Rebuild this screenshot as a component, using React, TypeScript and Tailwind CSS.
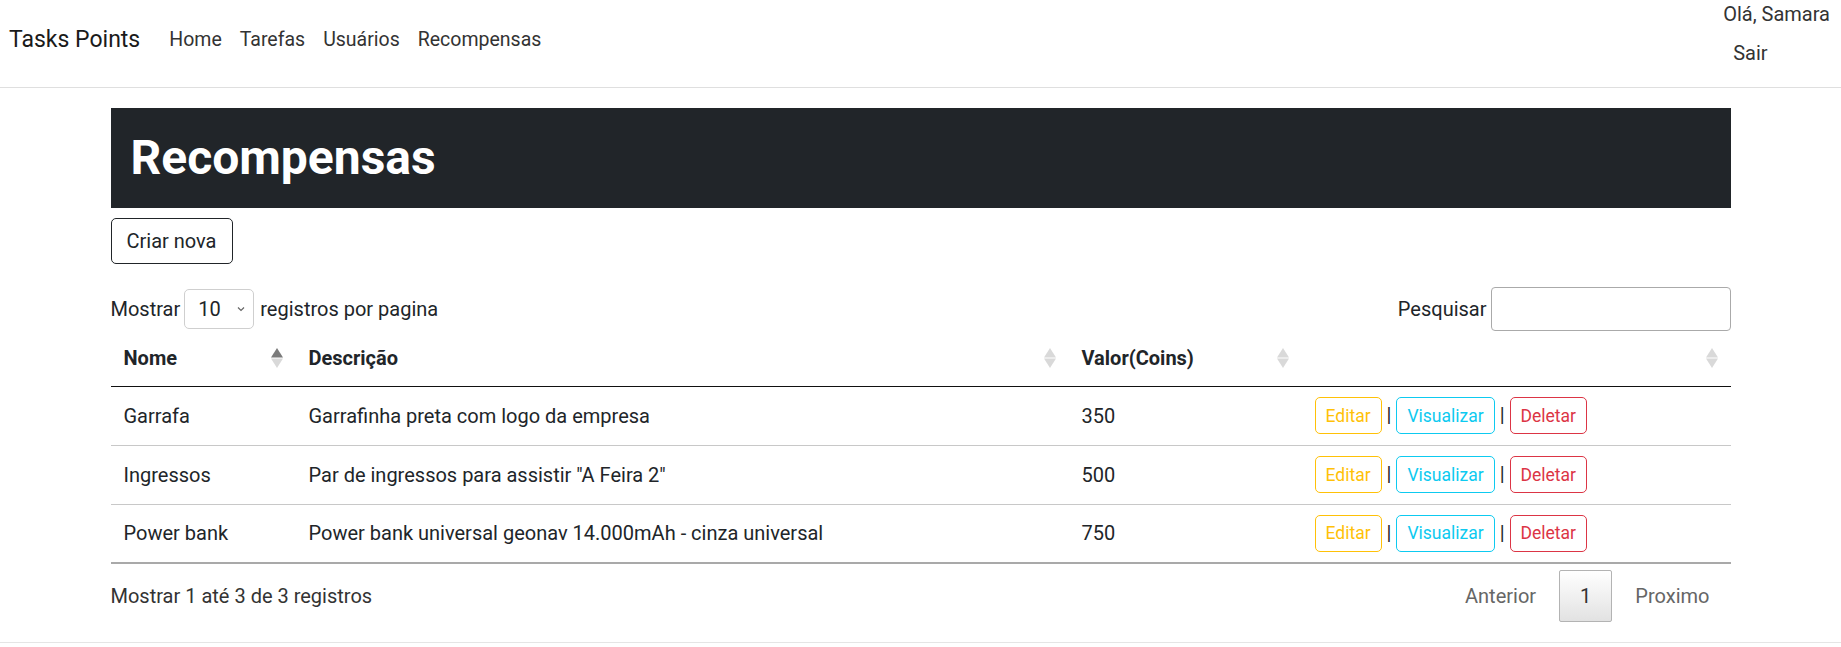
import type { ReactNode } from 'react'

const FONT = "font-['Roboto','Liberation_Sans',Arial,sans-serif]"

const NAV = ['Home', 'Tarefas', 'Usuários', 'Recompensas']

const REWARDS = [
  { nome: 'Garrafa', descricao: 'Garrafinha preta com logo da empresa', valor: 350 },
  { nome: 'Ingressos', descricao: 'Par de ingressos para assistir "A Feira 2"', valor: 500 },
  { nome: 'Power bank', descricao: 'Power bank universal geonav 14.000mAh - cinza universal', valor: 750 },
]

// setinhas de ordenação do datatables
function SortIcon({ active = false }: { active?: boolean }) {
  return (
    <svg width="12" height="20" viewBox="0 0 12 20" className="shrink-0">
      <path d="M6 0 L12 9.5 L0 9.5 Z" fill={active ? '#7a7a7a' : '#d9d9d9'} />
      <path d="M6 20 L12 10.5 L0 10.5 Z" fill="#d9d9d9" />
    </svg>
  )
}

function Th({ children, active }: { children?: ReactNode; active?: boolean }) {
  return (
    <th className="h-[55px] border-b border-[#111] pl-[13px] pr-[13px] text-left align-middle font-bold">
      <div className="flex items-center justify-between">
        <span>{children}</span>
        <SortIcon active={active} />
      </div>
    </th>
  )
}

function App() {
  return (
    <div className={`min-h-screen bg-white text-[20px] leading-[30px] text-[#212529] ${FONT}`}>
      {/* navbar */}
      <header className="flex h-[88px] items-start border-b border-[#dfdfdf]">
        <a className="mt-[25px] ml-[9px] text-[23px] leading-[30px] text-[#1a1a1a]">Tasks Points</a>
        <ul className="mt-[25px] ml-[29px] flex gap-[18px] text-[19.5px] text-[#333]">
          {NAV.map((n) => (
            <li key={n}>{n}</li>
          ))}
        </ul>
        <ul className="ml-auto mr-[11px] flex flex-col items-start text-[#333]">
          <li className="leading-[28px]">Olá, Samara</li>
          <li className="mt-[11px] ml-[10px] leading-[28px]">Sair</li>
        </ul>
      </header>

      <main className="mx-auto w-[1620px]">
        <div className="mt-[20px] bg-[#212529] p-[20px]">
          <h1 className="text-[48px] leading-[60px] font-bold text-white">Recompensas</h1>
        </div>

        <button
          type="button"
          className="mt-[10px] h-[46px] rounded-[5px] border border-[#212529] px-[15px] text-[20px] leading-[30px]"
        >
          Criar nova
        </button>

        <div className="mt-[22px] flex h-[45px] items-center justify-between">
          <div className="flex items-center">
            <span>Mostrar</span>
            <div className="ml-[4px] flex h-[40px] w-[70px] items-center justify-between rounded-[5px] border border-[#cfcfcf] pr-[8px] pl-[13px]">
              <span>10</span>
              <svg width="8" height="6" viewBox="0 0 8 6">
                <path d="M1 1.5 L4 4.5 L7 1.5" fill="none" stroke="#666" strokeWidth="1.2" />
              </svg>
            </div>
            <span className="ml-[6px]">registros por pagina</span>
          </div>
          <div className="flex items-center">
            <span>Pesquisar</span>
            <input className="ml-[4px] h-[44px] w-[240px] rounded-[4px] border border-[#aaa] px-[6px] outline-none" />
          </div>
        </div>

        <table className="w-full table-fixed border-collapse">
          <colgroup>
            <col className="w-[185px]" />
            <col className="w-[773px]" />
            <col className="w-[233px]" />
            <col />
          </colgroup>
          <thead>
            <tr>
              <Th active>Nome</Th>
              <Th>Descrição</Th>
              <Th>Valor(Coins)</Th>
              <Th />
            </tr>
          </thead>
          <tbody>
            {REWARDS.map((r, i) => (
              <tr
                key={r.nome}
                className={i === REWARDS.length - 1 ? 'border-b-2 border-[#a9a9a9]' : 'border-b border-[#c8c8c8]'}
              >
                <td className="h-[59px] px-[13px] align-middle">{r.nome}</td>
                <td className="px-[13px] align-middle">{r.descricao}</td>
                <td className="px-[13px] align-middle">{r.valor}</td>
                <td className="px-[13px] align-middle whitespace-nowrap">
                  <button
                    type="button"
                    className="h-[37px] rounded-[5px] border border-[#ffc107] px-[10px] text-[17.5px] leading-[26px] text-[#ffc107]"
                  >
                    Editar
                  </button>{' '}
                  |{' '}
                  <button
                    type="button"
                    className="h-[37px] rounded-[5px] border border-[#0dcaf0] px-[10px] text-[17.5px] leading-[26px] text-[#0dcaf0]"
                  >
                    Visualizar
                  </button>{' '}
                  |{' '}
                  <button
                    type="button"
                    className="h-[37px] rounded-[5px] border border-[#dc3545] px-[10px] text-[17.5px] leading-[26px] text-[#dc3545]"
                  >
                    Deletar
                  </button>
                </td>
              </tr>
            ))}
          </tbody>
        </table>

        <div className="flex items-center justify-between pt-[6px] pb-[20px]">
          <span className="text-[#333]">Mostrar 1 até 3 de 3 registros</span>
          <div className="flex items-center">
            <span className="border border-transparent px-[20px] py-[10px] text-[#666]">Anterior</span>
            <span className="ml-[2px] rounded-[2px] border border-[#b3b3b3] bg-gradient-to-b from-white to-[#e2e2e2] px-[20px] py-[10px] text-[#333]">
              1
            </span>
            <span className="ml-[2px] border border-transparent px-[20px] py-[10px] text-[#666]">Proximo</span>
          </div>
        </div>
      </main>

      <footer className="h-[20px] border-t border-[#e5e5e5]" />
    </div>
  )
}

export default App
